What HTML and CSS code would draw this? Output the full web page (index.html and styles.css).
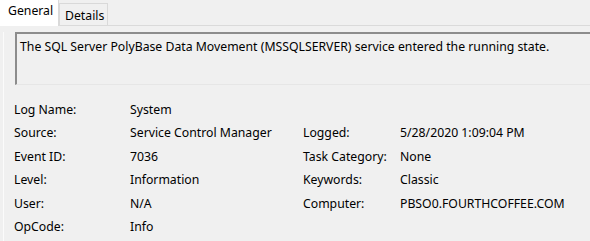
FILE: index.html
```html
<!DOCTYPE html>
<html lang="en">

<head>
    <meta charset="UTF-8">
    <title>Event Properties</title>
    <link rel="stylesheet" href="styles.css">
</head>

<body>
    <div class="tabs">
        <div class="tab active">General</div>
        <div class="tab">Details</div>
    </div>

    <div class="panel">
        <div class="desc">The SQL Server PolyBase Data Movement (MSSQLSERVER) service entered the running state.</div>

        <div class="props">
            <span>Log Name:</span><span>System</span><span></span><span></span>
            <span>Source:</span><span>Service Control Manager</span><span>Logged:</span><span>5/28/2020 1:09:04 PM</span>
            <span>Event ID:</span><span>7036</span><span>Task Category:</span><span>None</span>
            <span>Level:</span><span>Information</span><span>Keywords:</span><span>Classic</span>
            <span>User:</span><span>N/A</span><span>Computer:</span><span>PBSO0.FOURTHCOFFEE.COM</span>
            <span>OpCode:</span><span>Info</span><span></span><span></span>
        </div>
    </div>
</body>

</html>
```

FILE: styles.css
```css
body {
    margin: 0;
    background-color: #f0f0f0;
    font-family: "Noto Sans", "Open Sans", sans-serif;
    font-size: 12.25px;
    color: #000;
}

.tabs {
    display: flex;
    align-items: flex-end;
    height: 25px;
    border-bottom: 1px solid #dadada;
}

.tab {
    box-sizing: border-box;
    width: 49px;
    height: 22px;
    padding: 3px 0 0 5px;
    border: 1px solid #d9d9d9;
    border-bottom: none;
    background-color: #f0f0f0;
}

.tab.active {
    width: 59px;
    height: 26px;
    margin-bottom: -1px;
    padding: 2px 0 0 8px;
    border: none;
    border-right: 1px solid #d9d9d9;
    background-color: #fff;
}

.panel {
    margin-left: 3px;
    border-left: 1px solid #fbfbfb;
    height: 215px;
}

.desc {
    margin: 6px 0 0 11px;
    height: 46px;
    padding: 4px 0 0 3px;
    border-top: 2px solid #8c8c8c;
    border-left: 2px solid #8c8c8c;
    border-bottom: 1px solid #e6e6e6;
}

.props {
    display: grid;
    grid-template-columns: 116px 173px 97px auto;
    grid-auto-rows: 23.4px;
    margin: 16px 0 0 10px;
    white-space: nowrap;
}
```
